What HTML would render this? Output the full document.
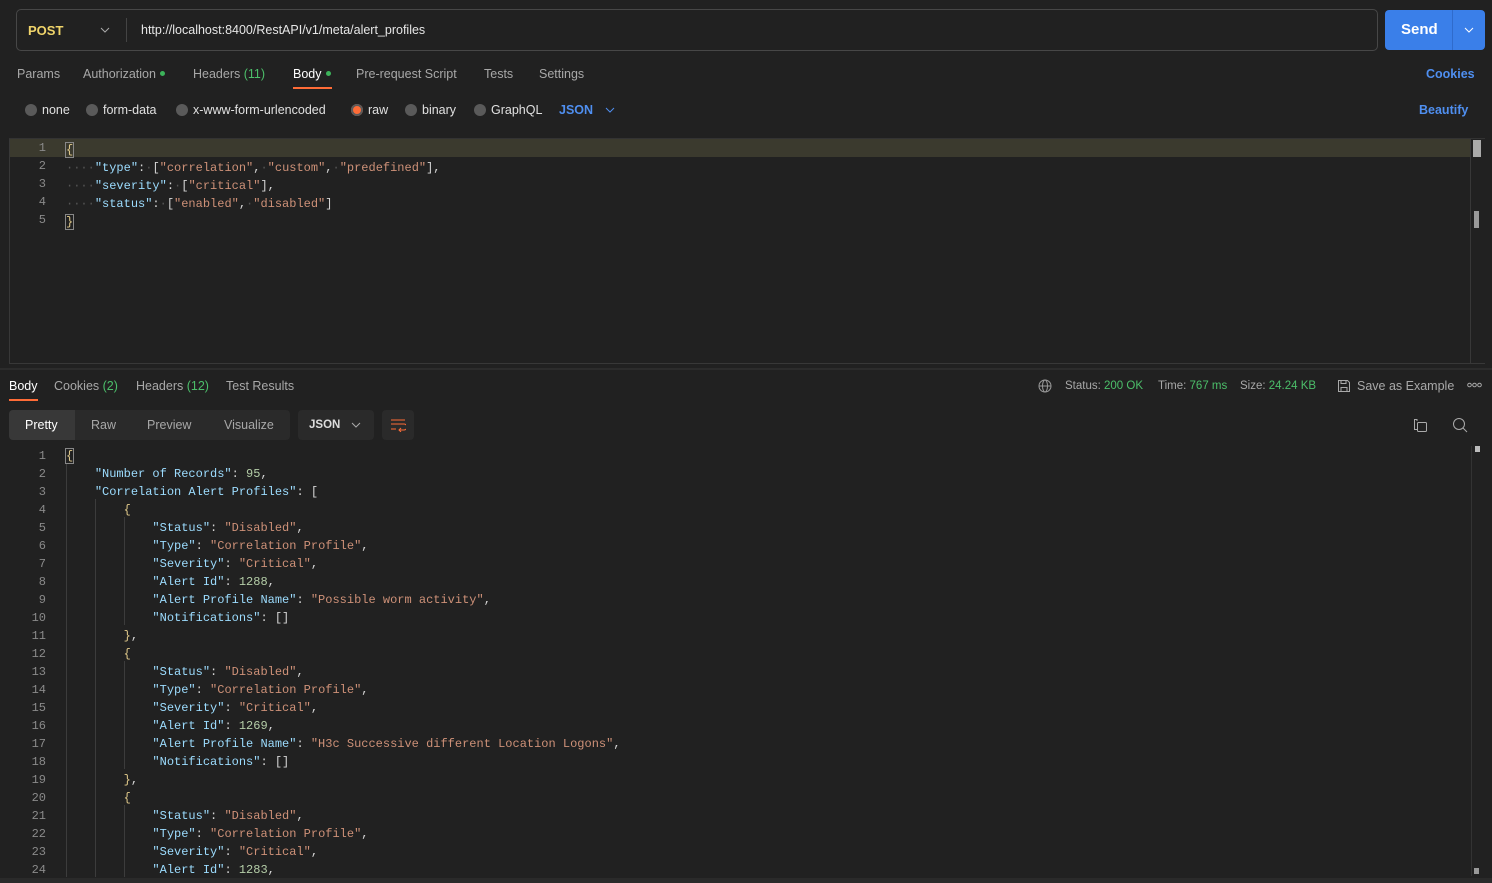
<!DOCTYPE html><html><head><style>
*{margin:0;padding:0;box-sizing:border-box}
body{width:1492px;height:883px;background:#212121;font-family:"Liberation Sans",sans-serif;color:#c8c8c8;position:relative;overflow:hidden;font-size:12.5px}
.a{position:absolute;white-space:nowrap}
.mono{font-family:"Liberation Mono",monospace;font-size:12px}
.ln{position:absolute;width:46px;text-align:right;color:#8a8a8a;font-family:"Liberation Mono",monospace;font-size:12px}
.k{color:#9cdcfe}.s{color:#ce9178}.n{color:#b5cea8}.p{color:#d4d4d4}.b{color:#e0c98a}.d{color:#555}
.g{color:#4cbf6a}
.dot{display:inline-block;width:5px;height:5px;border-radius:50%;background:#3cb35a;margin-left:4px;vertical-align:2px}
.rad{display:inline-block;width:12px;height:12px;border-radius:50%;background:#5a5a5a;vertical-align:-2px;margin-right:5px}
.guide{position:absolute;width:1px;background:#3c3c3c}
</style></head><body>
<div class="a" style="left:16px;top:9px;width:1362px;height:42px;border:1px solid #474747;border-radius:5px"></div>
<div class="a" style="left:28px;top:23px;font-weight:bold;color:#f0d46a;font-size:13px">POST</div>
<svg class="a" style="left:100px;top:26px" width="10" height="8"><path d="M1 2l4 4 4-4" stroke="#aaa" fill="none"/></svg>
<div class="a" style="left:126px;top:18px;width:1px;height:24px;background:#444"></div>
<div class="a" style="left:141px;top:23px;color:#e6e6e6;font-size:12.5px">http://localhost:8400/RestAPI/v1/meta/alert_profiles</div>
<div class="a" style="left:1385px;top:10px;width:100px;height:40px;background:#3a7fe9;border-radius:4px"></div>
<div class="a" style="left:1452px;top:10px;width:1px;height:40px;background:#2f6bcc"></div>
<div class="a" style="left:1401px;top:21px;color:#fff;font-weight:bold;font-size:15px">Send</div>
<svg class="a" style="left:1464px;top:27px" width="10" height="7"><path d="M1 1l4 4 4-4" stroke="#fff" fill="none"/></svg>
<div class="a" style="left:17px;top:67px;color:#a8a8a8">Params</div>
<div class="a" style="left:83px;top:67px;color:#a8a8a8">Authorization<span class="dot"></span></div>
<div class="a" style="left:193px;top:67px;color:#a8a8a8">Headers <span class="g">(11)</span></div>
<div class="a" style="left:293px;top:67px;color:#fff">Body<span class="dot"></span></div>
<div class="a" style="left:293px;top:87px;width:39px;height:2px;background:#ff6c37"></div>
<div class="a" style="left:356px;top:67px;color:#a8a8a8">Pre-request Script</div>
<div class="a" style="left:484px;top:67px;color:#a8a8a8">Tests</div>
<div class="a" style="left:539px;top:67px;color:#a8a8a8">Settings</div>
<div class="a" style="left:1426px;top:67px;color:#4f8ff0;font-weight:bold">Cookies</div>
<div class="a" style="left:25px;top:103px;color:#e0e0e0"><span class="rad"></span>none</div>
<div class="a" style="left:86px;top:103px;color:#e0e0e0"><span class="rad"></span>form-data</div>
<div class="a" style="left:176px;top:103px;color:#e0e0e0"><span class="rad"></span>x-www-form-urlencoded</div>
<div class="a" style="left:351px;top:103px;color:#e0e0e0"><span class="rad" style="background:#ff6c37;box-shadow:inset 0 0 0 2px #5a5a5a"></span>raw</div>
<div class="a" style="left:405px;top:103px;color:#e0e0e0"><span class="rad"></span>binary</div>
<div class="a" style="left:474px;top:103px;color:#e0e0e0"><span class="rad"></span>GraphQL</div>
<div class="a" style="left:559px;top:103px;color:#4f8ff0;font-weight:bold">JSON</div>
<svg class="a" style="left:605px;top:107px" width="10" height="7"><path d="M1 1l4 4 4-4" stroke="#4f8ff0" fill="none"/></svg>
<div class="a" style="left:1419px;top:103px;color:#4f8ff0;font-weight:bold">Beautify</div>
<div class="a" style="left:9px;top:138px;width:1476px;height:226px;border-left:1px solid #383838;border-bottom:1px solid #383838;border-top:1px solid #333"></div>
<div class="a" style="left:10px;top:139px;width:1460px;height:18px;background:#3b3a2e"></div>
<div class="a" style="left:1470px;top:139px;width:1px;height:224px;background:#383838"></div>
<div class="a" style="left:1473px;top:140px;width:8px;height:17px;background:#aaa"></div>
<div class="a" style="left:1474px;top:211px;width:5px;height:17px;background:#999"></div>
<div class="ln" style="top:141px">1</div><div class="ln" style="top:159px">2</div><div class="ln" style="top:177px">3</div><div class="ln" style="top:195px">4</div><div class="ln" style="top:213px">5</div>
<div class="a mono" style="left:66px;top:141px;line-height:18px"><span class="b" style="outline:1px solid #888">{</span><br><span class="d">····</span><span class="k">"type"</span><span class="p">:</span><span class="d">·</span><span class="p">[</span><span class="s">"correlation"</span><span class="p">,</span><span class="d">·</span><span class="s">"custom"</span><span class="p">,</span><span class="d">·</span><span class="s">"predefined"</span><span class="p">],</span><br><span class="d">····</span><span class="k">"severity"</span><span class="p">:</span><span class="d">·</span><span class="p">[</span><span class="s">"critical"</span><span class="p">],</span><br><span class="d">····</span><span class="k">"status"</span><span class="p">:</span><span class="d">·</span><span class="p">[</span><span class="s">"enabled"</span><span class="p">,</span><span class="d">·</span><span class="s">"disabled"</span><span class="p">]</span><br><span class="b" style="outline:1px solid #888">}</span></div>
<div class="a" style="left:0;top:368px;width:1492px;height:2px;background:#2c2c2c"></div>
<div class="a" style="left:9px;top:379px;color:#fff">Body</div>
<div class="a" style="left:9px;top:399px;width:29px;height:2px;background:#ff6c37"></div>
<div class="a" style="left:54px;top:379px;color:#a8a8a8">Cookies <span class="g">(2)</span></div>
<div class="a" style="left:136px;top:379px;color:#a8a8a8">Headers <span class="g">(12)</span></div>
<div class="a" style="left:226px;top:379px;color:#a8a8a8">Test Results</div>
<svg class="a" style="left:1038px;top:379px" width="14" height="14"><circle cx="7" cy="7" r="6" stroke="#999" fill="none"/><ellipse cx="7" cy="7" rx="2.5" ry="6" stroke="#999" fill="none"/><path d="M1 7h12" stroke="#999"/></svg>
<div class="a" style="left:1065px;top:380px;font-size:11.5px;color:#a8a8a8">Status: <span class="g">200 OK</span></div>
<div class="a" style="left:1158px;top:380px;font-size:11.5px;color:#a8a8a8">Time: <span class="g">767 ms</span></div>
<div class="a" style="left:1240px;top:380px;font-size:11.5px;color:#a8a8a8">Size: <span class="g">24.24 KB</span></div>
<svg class="a" style="left:1337px;top:379px" width="14" height="14"><path d="M1.5 1.5h9l2 2v9h-11z M4 1.5v3h5v-3 M4 12.5v-4h6v4" stroke="#aaa" fill="none"/></svg>
<div class="a" style="left:1357px;top:379px;color:#a8a8a8">Save as Example</div>
<svg class="a" style="left:1467px;top:382px" width="16" height="6"><circle cx="2.5" cy="3" r="1.8" stroke="#aaa" fill="none"/><circle cx="7.5" cy="3" r="1.8" stroke="#aaa" fill="none"/><circle cx="12.5" cy="3" r="1.8" stroke="#aaa" fill="none"/></svg>
<div class="a" style="left:9px;top:410px;width:281px;height:30px;background:#2a2a2a;border-radius:4px"></div>
<div class="a" style="left:9px;top:410px;width:66px;height:30px;background:#383838;border-radius:4px 0 0 4px"></div>
<div class="a" style="left:25px;top:418px;color:#fff">Pretty</div>
<div class="a" style="left:91px;top:418px;color:#a8a8a8">Raw</div>
<div class="a" style="left:147px;top:418px;color:#a8a8a8">Preview</div>
<div class="a" style="left:224px;top:418px;color:#a8a8a8">Visualize</div>
<div class="a" style="left:298px;top:410px;width:76px;height:30px;background:#2a2a2a;border-radius:4px"></div>
<div class="a" style="left:309px;top:419px;color:#ddd;font-weight:bold;font-size:11.5px">JSON</div>
<svg class="a" style="left:351px;top:422px" width="10" height="7"><path d="M1 1l4 4 4-4" stroke="#aaa" fill="none"/></svg>
<div class="a" style="left:382px;top:410px;width:32px;height:30px;background:#2a2a2a;border-radius:4px"></div>
<svg class="a" style="left:390px;top:418px" width="16" height="14"><path d="M1 2h14 M1 6h13a3 3 0 0 1 0 6h-5 M11 10l-2 2 2 2 M1 11h5" stroke="#ff6c37" fill="none"/></svg>
<svg class="a" style="left:1413px;top:418px" width="16" height="16"><path d="M4 3V1.5h-2.5v10h2.5" stroke="#aaa" fill="none"/><rect x="4.5" y="4.5" width="9" height="9" rx="1" stroke="#aaa" fill="none"/></svg>
<svg class="a" style="left:1452px;top:417px" width="17" height="17"><circle cx="7" cy="7" r="5.5" stroke="#aaa" fill="none"/><path d="M11 11l4 4" stroke="#aaa"/></svg>
<div class="a" style="left:1475px;top:446px;width:5px;height:6px;background:#bbb"></div>
<div class="a" style="left:1471px;top:446px;width:1px;height:430px;background:#333"></div>
<div class="a" style="left:1474px;top:868px;width:5px;height:6px;background:#999"></div>
<div class="a" style="left:0;top:878px;width:1492px;height:5px;background:#2a2a2a"></div>
<div class="guide" style="left:66px;top:463px;height:414px"></div>
<div class="guide" style="left:95px;top:499px;height:378px"></div>
<div class="guide" style="left:124px;top:517px;height:108px"></div>
<div class="guide" style="left:124px;top:661px;height:108px"></div>
<div class="guide" style="left:124px;top:805px;height:72px"></div>
<div class="a" style="left:0;top:447px;line-height:18px">
<div class="ln" style="position:static;line-height:18px">1<br>2<br>3<br>4<br>5<br>6<br>7<br>8<br>9<br>10<br>11<br>12<br>13<br>14<br>15<br>16<br>17<br>18<br>19<br>20<br>21<br>22<br>23<br>24</div></div>
<div class="a mono" style="left:66px;top:447px;line-height:18px;white-space:pre"><span class="b" style="outline:1px solid #888">{</span>
    <span class="k">"Number of Records"</span><span class="p">: </span><span class="n">95</span><span class="p">,</span>
    <span class="k">"Correlation Alert Profiles"</span><span class="p">: [</span>
        <span class="b">{</span>
            <span class="k">"Status"</span><span class="p">: </span><span class="s">"Disabled"</span><span class="p">,</span>
            <span class="k">"Type"</span><span class="p">: </span><span class="s">"Correlation Profile"</span><span class="p">,</span>
            <span class="k">"Severity"</span><span class="p">: </span><span class="s">"Critical"</span><span class="p">,</span>
            <span class="k">"Alert Id"</span><span class="p">: </span><span class="n">1288</span><span class="p">,</span>
            <span class="k">"Alert Profile Name"</span><span class="p">: </span><span class="s">"Possible worm activity"</span><span class="p">,</span>
            <span class="k">"Notifications"</span><span class="p">: []</span>
        <span class="b">}</span><span class="p">,</span>
        <span class="b">{</span>
            <span class="k">"Status"</span><span class="p">: </span><span class="s">"Disabled"</span><span class="p">,</span>
            <span class="k">"Type"</span><span class="p">: </span><span class="s">"Correlation Profile"</span><span class="p">,</span>
            <span class="k">"Severity"</span><span class="p">: </span><span class="s">"Critical"</span><span class="p">,</span>
            <span class="k">"Alert Id"</span><span class="p">: </span><span class="n">1269</span><span class="p">,</span>
            <span class="k">"Alert Profile Name"</span><span class="p">: </span><span class="s">"H3c Successive different Location Logons"</span><span class="p">,</span>
            <span class="k">"Notifications"</span><span class="p">: []</span>
        <span class="b">}</span><span class="p">,</span>
        <span class="b">{</span>
            <span class="k">"Status"</span><span class="p">: </span><span class="s">"Disabled"</span><span class="p">,</span>
            <span class="k">"Type"</span><span class="p">: </span><span class="s">"Correlation Profile"</span><span class="p">,</span>
            <span class="k">"Severity"</span><span class="p">: </span><span class="s">"Critical"</span><span class="p">,</span>
            <span class="k">"Alert Id"</span><span class="p">: </span><span class="n">1283</span><span class="p">,</span></div>
</body></html>
